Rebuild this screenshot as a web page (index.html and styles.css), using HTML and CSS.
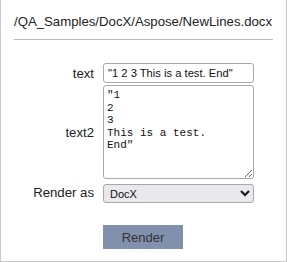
FILE: index.html
```html
<!DOCTYPE html>
<html>
<head>
    <title>Render</title>
    <link rel="stylesheet" href="styles.css">
</head>
<body>
    <div class="panel">
        <h1 class="path">/QA_Samples/DocX/Aspose/NewLines.docx</h1>
        <hr class="divider">
        <form class="render-form">
            <label class="field-label" for="text">text</label>
            <input class="field-input" id="text" type="text" value="&quot;1 2 3 This is a test. End&quot;">

            <label class="field-label" for="text2">text2</label>
            <textarea class="field-area" id="text2">"1
2
3
This is a test.
End"</textarea>

            <label class="field-label" for="format">Render as</label>
            <select class="field-select" id="format">
                <option>DocX</option>
                <option>Pdf</option>
                <option>Html</option>
            </select>

            <div class="actions">
                <button class="render-btn" type="button">Render</button>
            </div>
        </form>
    </div>
</body>
</html>
```

FILE: styles.css
```css
body {
    margin: 0;
    padding: 0;
    font-family: 'Liberation Sans', Arial, sans-serif;
    color: #222;
}

.panel {
    width: 287px;
    height: 262px;
    box-sizing: border-box;
    border: 1px solid #c8c8c8;
    border-top: none;
    padding: 13px 13px 0 13px;
}

.path {
    margin: 0;
    font-size: 13.2px;
    font-weight: normal;
    line-height: 18px;
    color: #222;
}

.divider {
    margin: 8px 0 0 0;
    border: none;
    border-top: 1px solid #b8b8b8;
}

.render-form {
    display: grid;
    grid-template-columns: 80px 151px;
    column-gap: 9px;
    row-gap: 2px;
    margin-top: 23px;
    align-items: center;
}

.field-label {
    text-align: right;
    font-size: 13.2px;
    color: #222;
}

.field-input,
.field-area,
.field-select {
    box-sizing: border-box;
    width: 151px;
    margin: 0;
    border: 1px solid #a8a8a8;
    border-radius: 3px;
    color: #111;
}

.field-input {
    height: 20px;
    padding: 0 4px;
    font-family: 'Liberation Sans', Arial, sans-serif;
    font-size: 11.2px;
}

.field-area {
    height: 94px;
    padding: 3px 3px;
    font-family: 'Liberation Mono', 'Courier New', monospace;
    font-size: 11px;
    line-height: 12.5px;
    resize: both;
}

.field-select {
    height: 19px;
    margin-top: 3px;
    padding: 0 2px;
    background: #e9e9ed;
    font-family: 'Liberation Sans', Arial, sans-serif;
    font-size: 11px;
    color: #111;
}

.actions {
    grid-column: 2;
    margin-top: 20px;
}

.render-btn {
    display: block;
    width: 80px;
    height: 24px;
    border: none;
    background: #8190ad;
    color: #333;
    font-family: 'Liberation Sans', Arial, sans-serif;
    font-size: 13px;
    cursor: pointer;
}
```
